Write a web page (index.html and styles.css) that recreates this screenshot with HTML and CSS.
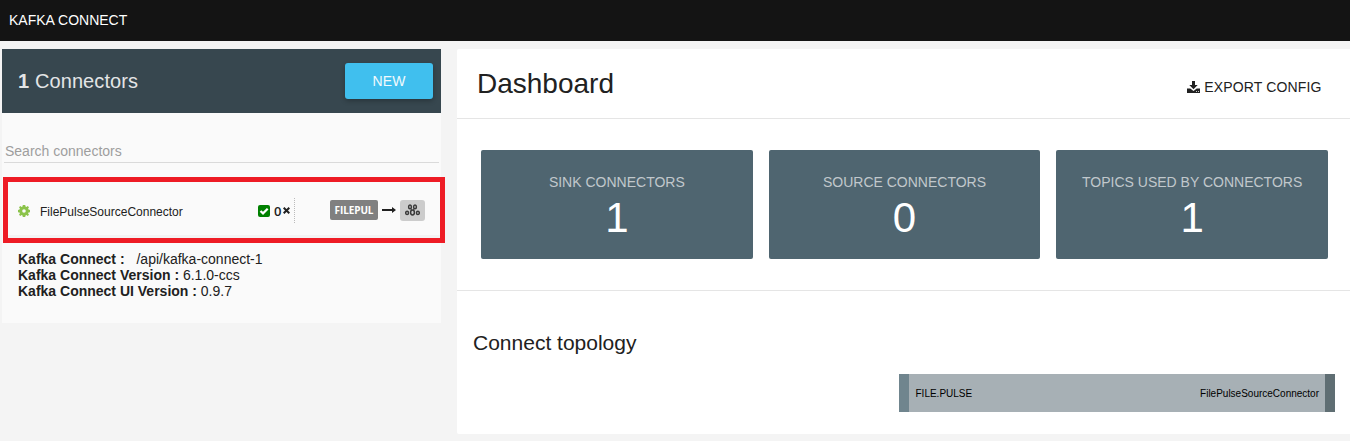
FILE: index.html
```html
<!DOCTYPE html>
<html lang="en">
<head>
<meta charset="utf-8">
<title>Kafka Connect</title>
<link rel="stylesheet" href="styles.css">
</head>
<body>
<header class="topbar">KAFKA CONNECT</header>
<div class="layout">
  <aside class="sidebar">
    <div class="sidebar-head">
      <h2 class="count"><b>1</b> Connectors</h2>
      <button class="new-btn">NEW</button>
    </div>
    <div class="search">Search connectors</div>
    <div class="connector">
      <svg class="gear" viewBox="0 0 12 12"><path fill="#8bc34a" fill-rule="evenodd" d="M4.800 0h2.400l.3 1.500 1 .4L9.700 1 11 2.300l-.9 1.300.4 1 1.500.3v2.300l-1.500.3-.4 1 .9 1.200L9.700 11l-1.300-.9-.9.400L7.200 12H4.800l-.3-1.500-1-.4L2.300 11 1 9.700l.9-1.300-.4-.9L0 7.200V4.900l1.500-.3.4-1L1 2.300 2.300 1l1.300.9.900-.4zM6 4.200a1.800 1.800 0 1 0 0 3.600 1.800 1.800 0 0 0 0-3.600z"/></svg>
      <span class="connector-name">FilePulseSourceConnector</span>
      <div class="tasks">
        <svg class="check" viewBox="0 0 12 12"><rect width="12" height="12" rx="2" fill="#008000"/><path d="M2.500 6 5 8.400 9.700 3.700" fill="none" stroke="#fff" stroke-width="2.200"/></svg>
        <b class="task-count">0</b>
        <svg class="times" viewBox="0 0 7 7"><path d="M.7.7l5.600 5.600M6.300.7.7 6.300" stroke="#212121" stroke-width="2"/></svg>
      </div>
      <div class="flow">
        <span class="badge">FILEPUL</span>
        <svg class="arrow" viewBox="0 0 14 8"><path d="M0 3h10V1L14 4 10 7V5H0z" fill="#212121"/></svg>
        <span class="topic">
          <svg class="topic-icon" viewBox="0 0 15 12"><g fill="none" stroke="#3a3a3a" stroke-width="1.500"><ellipse cx="5" cy="2.900" rx="1.400" ry="1.800"/><ellipse cx="10" cy="2.900" rx="1.400" ry="1.800"/><ellipse cx="2.100" cy="8.900" rx="1.400" ry="1.700"/><ellipse cx="7.500" cy="8.500" rx="1.900" ry="2.400"/><ellipse cx="12.900" cy="8.900" rx="1.400" ry="1.700"/><path d="M5.800 4.500l.7 1.500M9.200 4.500l-.7 1.500" stroke-width="1"/></g></svg>
        </span>
      </div>
    </div>
    <div class="info">
      <div><b>Kafka Connect :</b> <span class="endpoint">/api/kafka-connect-1</span></div>
      <div><b>Kafka Connect Version :</b> 6.1.0-ccs</div>
      <div><b>Kafka Connect UI Version :</b> 0.9.7</div>
    </div>
    <div class="highlight"></div>
  </aside>
  <main class="main">
    <div class="main-head">
      <h1 class="title">Dashboard</h1>
      <a class="export"><svg class="download" viewBox="0 0 13 12"><path fill="#212121" fill-rule="evenodd" d="M5 0h3v4h2.700L6.500 8.200 2.300 4H5zM0 7.500h3.300l3.200 2.400L9.700 7.500H13V12H0zM9 10v.8h1V10zm2 0v.8h1V10z"/></svg>EXPORT CONFIG</a>
    </div>
    <section class="stats">
      <div class="card"><span class="label">SINK CONNECTORS</span><span class="value">1</span></div>
      <div class="card"><span class="label">SOURCE CONNECTORS</span><span class="value">0</span></div>
      <div class="card"><span class="label">TOPICS USED BY CONNECTORS</span><span class="value">1</span></div>
    </section>
    <section class="topology">
      <h3 class="subtitle">Connect topology</h3>
      <div class="link"><span>FILE.PULSE</span><span>FilePulseSourceConnector</span></div>
    </section>
  </main>
</div>
</body>
</html>
```
FILE: styles.css
```css
* { box-sizing: border-box; }
body {
  margin: 0;
  height: 441px;
  overflow: hidden;
  background: #f4f4f4;
  color: #212121;
  font: 14px/16px "Liberation Sans", Arial, sans-serif;
}
h1, h2, h3 { margin: 0; font-weight: 400; }
.topbar {
  height: 41px;
  padding-left: 9px;
  background: #141414;
  color: #fff;
  line-height: 40px;
}
.layout {
  display: flex;
  align-items: flex-start;
  gap: 16px;
  padding: 8px 0 0 2px;
}
.sidebar {
  position: relative;
  width: 439px;
  height: 274px;
  background: #fafafa;
}
.sidebar-head {
  display: flex;
  align-items: center;
  justify-content: space-between;
  height: 64px;
  padding: 0 8px 0 16px;
  background: #37474f;
}
.count {
  color: #e3e5e6;
  font-size: 20px;
  line-height: 24px;
  letter-spacing: 0.1px;
}
.new-btn {
  width: 88px;
  height: 36px;
  padding: 0;
  border: 0;
  border-radius: 3px;
  background: #40bfee;
  color: #f1fafd;
  font: 14px "Liberation Sans", Arial, sans-serif;
  letter-spacing: 0.14px;
  box-shadow: 0 2px 5px rgba(0, 0, 0, .26);
}
.search {
  height: 24px;
  margin: 26px 2px 0;
  padding-left: 1px;
  border-bottom: 1px solid #dadada;
  color: #9e9e9e;
  line-height: 24px;
}
.connector {
  display: flex;
  align-items: center;
  height: 75px;
  margin: 0 0 0 2px;
  padding: 22px 0 0 14px;
  border-bottom: 3px solid #f3f3f3;
}
.gear { width: 12px; height: 12px; margin-top: 2px; }
.connector-name {
  width: 227px;
  padding: 3px 0 0 10px;
  font-size: 12px;
}
.tasks {
  display: flex;
  align-items: center;
  width: 38px;
  height: 25px;
  padding-top: 1px;
  border-right: 1px dotted #bbb;
}
.check { width: 12px; height: 12px; margin-left: 1px; }
.task-count {
  width: 8px;
  margin: 0 1px 0 4px;
  font: 600 13px/16px "Open Sans", sans-serif;
}
.times { width: 7px; height: 7px; }
.flow { display: flex; align-items: center; padding-left: 35px; }
.badge {
  width: 48px;
  height: 20px;
  border-radius: 2px;
  background: #808080;
  color: #fff;
  font: bold 10px/20px "Open Sans", sans-serif;
  letter-spacing: -0.1px;
  text-align: center;
}
.arrow { width: 14px; height: 8px; margin: 0 4px; }
.topic {
  display: flex;
  align-items: center;
  justify-content: center;
  width: 25px;
  height: 21px;
  border-radius: 3px;
  background: #ccc;
}
.topic-icon { width: 15px; height: 12px; }
.info { padding: 13px 0 0 16px; }
.endpoint { padding-left: 8px; }
.highlight {
  position: absolute;
  left: 1px;
  top: 128px;
  width: 442px;
  height: 66px;
  border: 5px solid #ee1c25;
}
.main {
  flex: 1;
  height: 385px;
  border-radius: 2px 0 0 2px;
  background: #fff;
}
.main-head {
  display: flex;
  justify-content: space-between;
  height: 70px;
  padding: 18px 28.5px 0 20px;
  border-bottom: 1px solid #e5e5e5;
}
.title { font-size: 28px; line-height: 33px; }
.export {
  display: flex;
  align-items: center;
  height: 16px;
  margin-top: 12px;
  letter-spacing: 0.14px;
}
.download { width: 13px; height: 12px; margin-right: 4px; }
.stats {
  display: grid;
  grid-template-columns: repeat(3, 1fr);
  gap: 16px;
  height: 172px;
  padding: 31px 22px 31px 24px;
  border-bottom: 1px solid #e5e5e5;
}
.card {
  display: flex;
  flex-direction: column;
  align-items: center;
  height: 109px;
  padding-top: 24px;
  border-radius: 2px;
  background: #4f6570;
}
.label { color: #c1c8cc; }
.value { margin-top: 4px; color: #fff; font-size: 42px; line-height: 48px; }
.topology { padding: 40px 15px 0 16px; }
.subtitle { font-size: 21px; line-height: 24px; }
.link {
  display: flex;
  align-items: center;
  justify-content: space-between;
  width: 436px;
  height: 38px;
  margin: 19px 0 0 auto;
  padding: 2px 6px 0 6.5px;
  border-left: 10px solid #70858e;
  border-right: 10px solid #5f6e73;
  background: #a7b0b5;
  color: #000;
  font-size: 10px;
}
```
